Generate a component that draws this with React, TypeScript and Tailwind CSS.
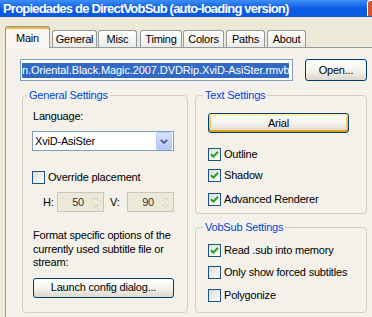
import React from 'react';

// Windows XP style property sheet for DirectVobSub

function Check({ checked, label, className = '' }: { checked?: boolean; label: string; className?: string }) {
    return (
        <div className={`flex items-center h-[13px] ${className}`}>
            <span className="w-[13px] h-[13px] shrink-0 border border-[#1C5180] bg-gradient-to-br from-[#DCDCD7] to-white flex items-center justify-center">
                {checked && (
                    <svg width="9" height="9" viewBox="0 0 9 9" fill="none">
                        <path d="M1 4.2L3.4 6.6L8 1.8" stroke="#21A121" strokeWidth="2" />
                    </svg>
                )}
            </span>
            <span className="ml-[3px] leading-[13px]">{label}</span>
        </div>
    );
}

function Group({
    title,
    className = '',
    legendClass = '',
    children,
}: {
    title: string;
    className?: string;
    legendClass?: string;
    children: React.ReactNode;
}) {
    return (
        <fieldset className={`border border-[#D0D0BF] rounded-[4px] ${className}`}>
            <legend className={`px-[2px] text-[#0046D5] leading-[13px] ${legendClass}`}>{title}</legend>
            {children}
        </fieldset>
    );
}

function XpButton({ label, hot, className = '' }: { label: string; hot?: boolean; className?: string }) {
    return (
        <div
            className={`flex items-center justify-center border border-[#003C74] rounded-[3px] bg-gradient-to-b from-white via-[#F4F3EE] to-[#DCD8CB] ${
                hot ? 'shadow-[inset_0_2px_0_#FFEDB8,inset_0_-2px_0_#E5A01A,inset_2px_0_0_#F8C55A,inset_-2px_0_0_#F8C55A]' : ''
            } ${className}`}
        >
            {label}
        </div>
    );
}

function Spin({ value }: { value: string }) {
    return (
        <div className="w-[47px] h-[20px] border border-[#C9C7BA] bg-[#ECE9D8] flex items-center">
            <span className="flex-1 text-right pr-[4px] text-[#333]">{value}</span>
            <div className="w-[14px] h-full flex flex-col items-center justify-center gap-[3px] mr-[1px]">
                <svg width="7" height="4" viewBox="0 0 7 4"><path d="M0.5 3.5L3.5 0.5L6.5 3.5" stroke="#C9C7BA" fill="none" /></svg>
                <svg width="7" height="4" viewBox="0 0 7 4"><path d="M0.5 0.5L3.5 3.5L6.5 0.5" stroke="#C9C7BA" fill="none" /></svg>
            </div>
        </div>
    );
}

const tabs = [
    { name: 'General', ml: 'ml-[2px]', w: 'w-[45px]' },
    { name: 'Misc', ml: 'ml-[1px]', w: 'w-[39px]' },
    { name: 'Timing', ml: 'ml-[3px]', w: 'w-[42px]' },
    { name: 'Colors', ml: 'ml-[1px]', w: 'w-[41px]' },
    { name: 'Paths', ml: 'ml-[2px]', w: 'w-[39px]' },
    { name: 'About', ml: 'ml-[2px]', w: 'w-[39px]' },
];

export default function App() {
    return (
        <div className="w-[372px] h-[317px] overflow-hidden bg-[#ECE9D8] text-[11px] text-black font-['Liberation_Sans',Arial,sans-serif] tracking-[-0.2px] relative">
            {/* Title bar */}
            <div className="h-[17px] bg-gradient-to-b from-[#3D8DF5] via-[#0A5CE6] to-[#0958E0] flex items-center pl-[3px]">
                <span className="text-white font-bold text-[13px] tracking-[-0.8px] leading-[17px] whitespace-nowrap">
                    Propiedades de DirectVobSub (auto-loading version)
                </span>
            </div>
            <div className="absolute right-0 top-0 w-[5px] h-[16px] border-l border-t border-white rounded-tl-[3px] bg-[#D9532B]" />

            {/* Tabs */}
            <div className="mt-[9px] h-[21px] flex items-end pl-[5px]">
                <div className="relative z-10 -mb-px w-[45px] h-[22px] border border-b-0 border-[#919B9C] rounded-t-[3px] bg-[#F8F7F3] flex justify-center pt-[3px] shadow-[inset_0_2px_0_#F5B73B]">
                    Main
                </div>
                {tabs.map((t) => (
                    <div
                        key={t.name}
                        className={`${t.ml} ${t.w} h-[17px] border border-b-0 border-[#919B9C] rounded-t-[3px] bg-gradient-to-b from-white to-[#ECEBE6] flex items-center justify-center`}
                    >
                        {t.name}
                    </div>
                ))}
            </div>

            {/* Tab panel */}
            <div className="ml-[5px] w-[390px] h-[300px] border border-[#919B9C] bg-[#F3F1E9] pl-[14px]">
                <div className="mt-[11px] flex items-center">
                    <div className="w-[273px] h-[22px] border border-[#7F9DB9] bg-white flex items-center pl-[1px] overflow-hidden">
                        <span className="bg-[#316AC5] text-white whitespace-nowrap leading-[15px] tracking-[-0.1px]">
                            n.Oriental.Black.Magic.2007.DVDRip.XviD-AsiSter.rmvb
                        </span>
                    </div>
                    <XpButton label="Open..." className="ml-[12px] w-[62px] h-[22px]" />
                </div>

                <div className="mt-[8px] ml-[2px] flex items-start">
                    {/* General Settings */}
                    <Group title="General Settings" legendClass="-ml-[6px]" className="w-[166px] pl-[10px] pb-[14px]">
                        <div className="mt-[8px] leading-[13px]">Language:</div>
                        <div className="mt-[8px] w-[142px] h-[20px] border border-[#7F9DB9] bg-white flex items-center -ml-px">
                            <span className="flex-1 pl-[2px]">XviD-AsiSter</span>
                            <div className="w-[16px] h-[18px] mr-px rounded-[2px] border border-[#B8CAF5] bg-gradient-to-b from-[#D7E3FD] to-[#B2C6F5] flex items-center justify-center">
                                <svg width="8" height="5" viewBox="0 0 8 5">
                                    <path d="M0.8 0.8L4 4L7.2 0.8" stroke="#4D6185" strokeWidth="1.8" fill="none" />
                                </svg>
                            </div>
                        </div>
                        <Check label="Override placement" className="mt-[20px] -ml-px" />
                        <div className="mt-[8px] flex items-center">
                            <span className="ml-[10px] w-[14px]">H:</span>
                            <Spin value="50" />
                            <span className="ml-[6px] w-[17px]">V:</span>
                            <Spin value="90" />
                        </div>
                        <div className="mt-[17px] leading-[13.5px]">
                            Format specific options of the
                            <br />
                            currently used subtitle file or
                            <br />
                            stream:
                        </div>
                        <XpButton label="Launch config dialog..." className="mt-[8px] w-[141px] h-[20px]" />
                    </Group>

                    <div className="ml-[7px] flex flex-col">
                        {/* Text Settings */}
                        <Group title="Text Settings" legendClass="-ml-[5px]" className="w-[172px] pl-[12px] pb-[7px]">
                            <XpButton label="Arial" hot className="mt-[11px] w-[141px] h-[20px]" />
                            <Check checked label="Outline" className="mt-[15px]" />
                            <Check checked label="Shadow" className="mt-[8px]" />
                            <Check checked label="Advanced Renderer" className="mt-[11px]" />
                        </Group>

                        {/* VobSub Settings */}
                        <Group title="VobSub Settings" legendClass="-ml-[5px]" className="mt-[7px] w-[172px] pl-[12px] pb-[10px]">
                            <Check checked label="Read .sub into memory" className="mt-[10px]" />
                            <Check label="Only show forced subtitles" className="mt-[9px]" />
                            <Check label="Polygonize" className="mt-[10px]" />
                        </Group>
                    </div>
                </div>
            </div>
        </div>
    );
}
